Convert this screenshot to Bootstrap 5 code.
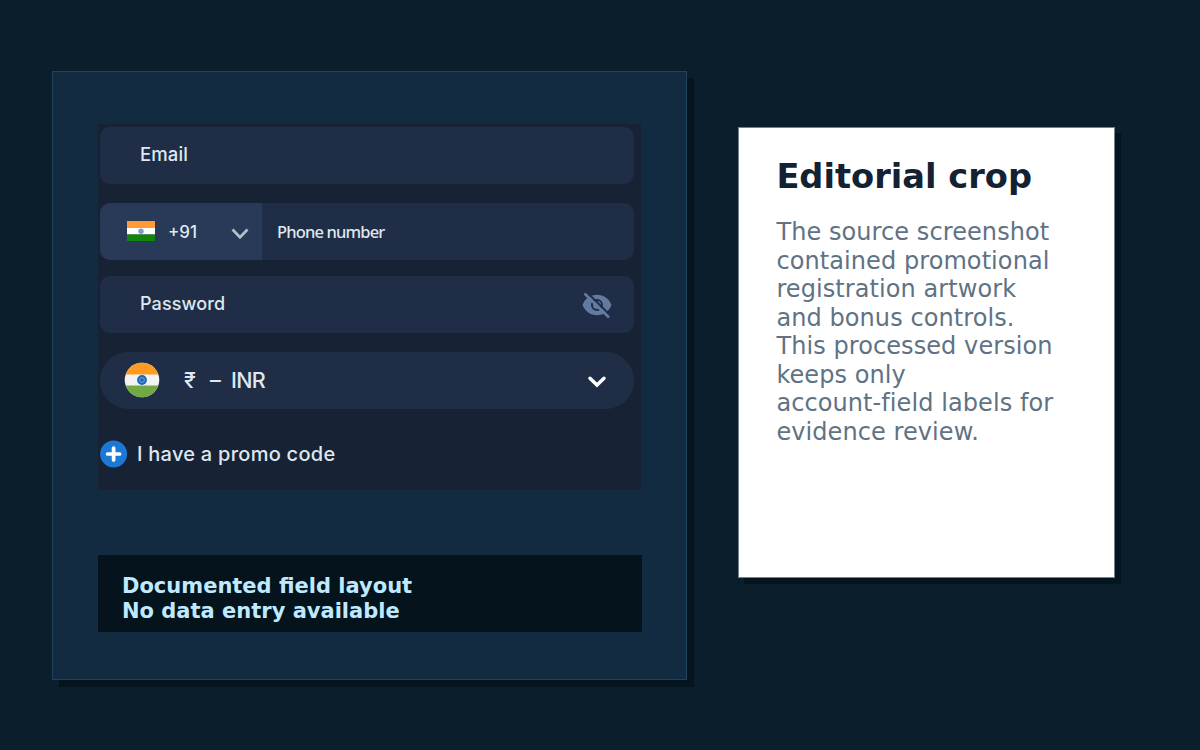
<!DOCTYPE html>
<html lang="en">
<head>
<meta charset="utf-8">
<meta name="viewport" content="width=device-width, initial-scale=1">
<title>Editorial crop</title>
<link href="https://cdn.jsdelivr.net/npm/bootstrap@5.3.0/dist/css/bootstrap.min.css" rel="stylesheet">
<style>
body{background:#0a1e2c;font-family:"DejaVu Sans",sans-serif;height:750px;overflow:hidden}
.stage{padding:71px 0 0 52px;gap:51px}
.panel{width:635px;height:609px;background:#132b41;border:1px solid #204460;box-shadow:7px 7px 0 #04151f;padding:52px 44px 0}
.fields{width:543px;height:366px;background:#172334;padding:3px 7px 0 2px;font-family:Inter,sans-serif;color:#dfe7f1;margin-left:1px}
.field{height:57px;background:#1f2e46;border-radius:10px;font-size:18px;font-weight:500;white-space:nowrap;overflow:hidden}
.dial{width:162px;background:#283a57;padding-left:27px}
.pill{border-radius:29px;font-size:21.5px}
.caption-box{width:544px;height:77px;background:#04131c;color:#bfe9ff;font-size:21px;line-height:25px;padding:18.500px 24px 0;margin:65px 0 0 1px}
.note{width:377px;height:451px;margin:56px 0 0;border:1px solid #73828e;box-shadow:6px 6px 0 #04151f;padding:28px 37px 0 37.400px}
.note h1{font-size:33.650px;line-height:40px;padding-top:1px;color:#122233;margin-bottom:21px}
.note p{font-size:24px;letter-spacing:.08px;line-height:28.57px;color:#607284}
.t-email,.t-pass{padding-left:40px;padding-bottom:2px}
.t-email{font-size:18.500px;letter-spacing:.1px}
.t-pass{letter-spacing:.1px}
.f-phone{margin-top:19px}
.t-code{margin:2px 0 0 13px;width:31px;font-size:17px}
.dial svg:first-child{margin-top:-1px}
.dial-chev{margin:4px 0 0 32px}
.t-phone{font:500 16.500px "Noto Sans",sans-serif;letter-spacing:-.85px;padding-left:15px}
.f-pass{margin-top:16px}
.eye{margin-right:21px}
.pill{margin-top:19px}
.round-flag{margin:-2px 0 0 23.500px}
.t-rupee,.t-dash,.t-inr{padding-bottom:1px}
.t-rupee{margin-left:24.500px;width:26px}
.t-dash{width:21px}
.t-inr{letter-spacing:-.7px}
.pill-chev{margin:3px 27px 0 auto}
.promo{margin-top:29.500px;font-size:20px;font-weight:500;white-space:nowrap}
.t-promo{margin:0 0 0 9px;letter-spacing:.26px}
</style>
</head>
<body>
<main class="stage d-flex align-items-start">
<section class="panel flex-shrink-0">
<div class="fields">
<div class="field d-flex align-items-center"><span class="t-email">Email</span></div>
<div class="field f-phone d-flex align-items-stretch">
<div class="dial d-flex align-items-center">
<svg width="28" height="20" viewBox="0 0 28 20"><path fill="#ff9a35" d="M0 0h28v7H0z"/><path fill="#fff" d="M0 7h28v6.500H0z"/><path fill="#12860c" d="M0 13.500h28V20H0z"/><circle cx="14" cy="10.200" r="2.700" fill="#8b96c2"/></svg>
<span class="t-code">+91</span>
<svg class="dial-chev" width="18" height="12" viewBox="0 0 18 12" fill="none" stroke="#b4c0c9" stroke-width="2.700"><path d="M1.500 1.500 9 9.200l7.500-7.700"/></svg>
</div>
<span class="t-phone align-self-center">Phone number</span>
</div>
<div class="field f-pass d-flex align-items-center justify-content-between"><span class="t-pass">Password</span>
<svg class="eye" width="32" height="28" viewBox="0 0 32 28"><path fill="#647aa2" fill-rule="evenodd" d="M1.500 14C4 7.500 9.500 3.800 16 3.800S28 7.500 30.500 14C28 20.500 22.500 24.200 16 24.200S4 20.500 1.500 14zM16 8a6 6 0 1 0 0 12 6 6 0 0 0 0-12z"/><circle cx="16" cy="14" r="4" fill="#647aa2"/><path stroke="#1f2e46" stroke-width="2" d="M5.800 1.200 30 25"/><path stroke="#647aa2" stroke-width="2.500" d="M3.500 2.500 28 26.500"/></svg></div>
<div class="field pill d-flex align-items-center">
<svg class="round-flag" width="36" height="36" viewBox="0 0 36 36"><defs><clipPath id="disc"><circle cx="18" cy="18" r="17.300"/></clipPath></defs><g clip-path="url(#disc)"><path fill="#f3f3f3" d="M0 0h36v36H0z"/><path fill="#ff9b20" d="M0 0h36v12.500H0z"/><path fill="#72a944" d="M0 23.500h36V36H0z"/></g><circle cx="18" cy="18" r="3.900" fill="#5e94d4" stroke="#1d63b7" stroke-width="2"/><circle cx="18" cy="18" r="1.700" fill="#1d63b7"/></svg>
<span class="t-rupee">₹</span><span class="t-dash">–</span><span class="t-inr">INR</span>
<svg class="pill-chev" width="20" height="14" viewBox="0 0 20 14" fill="none" stroke="#fff" stroke-width="3.500" stroke-linecap="round"><path d="m3 3.300 7 6.700 7-6.700"/></svg>
</div>
<div class="promo d-flex align-items-center">
<svg width="28" height="28" viewBox="0 0 28 28"><circle cx="13.600" cy="14" r="13.500" fill="#1b78d5"/><path stroke="#fff" stroke-width="3.700" stroke-linecap="round" d="M7.600 14h12M13.600 8v12"/></svg>
<span class="t-promo">I have a promo code</span></div>
</div>
<div class="caption-box fw-bold">Documented field layout<br>No data entry available</div>
</section>
<aside class="note bg-white flex-shrink-0">
<h1 class="fw-bold">Editorial crop</h1>
<p class="mb-0 text-nowrap">The source screenshot<br>contained promotional<br>registration artwork<br>and bonus controls.<br>This processed version<br>keeps only<br>account-field labels for<br>evidence review.</p>
</aside>
</main>
</body>
</html>
